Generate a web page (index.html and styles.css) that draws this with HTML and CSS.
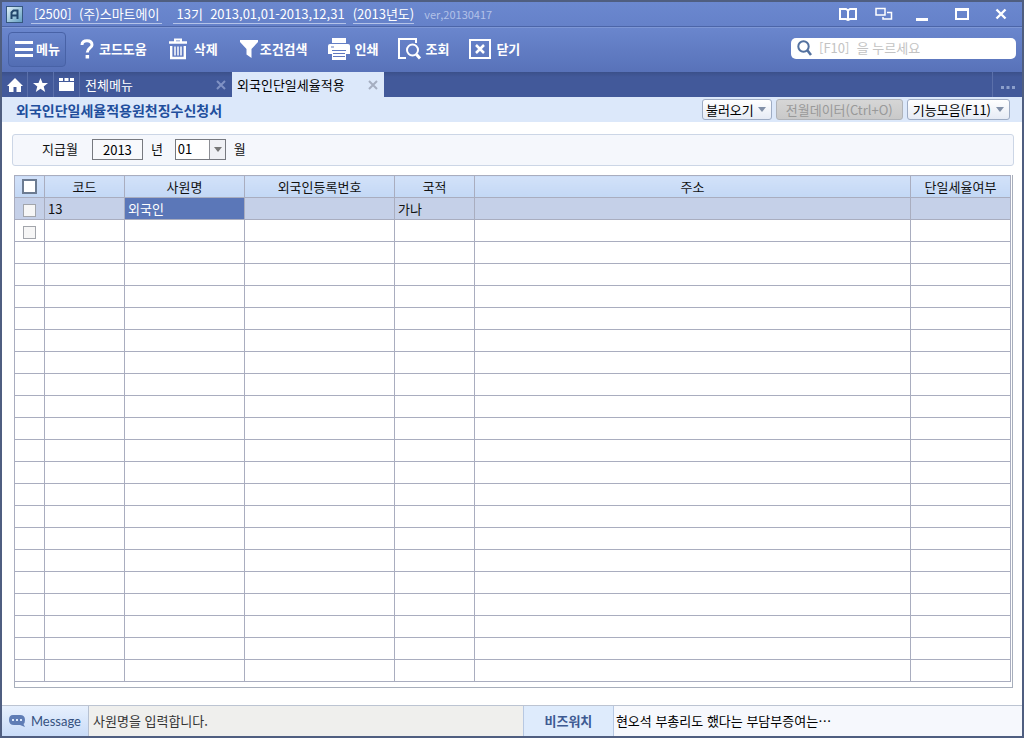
FILE: index.html
```html
<!DOCTYPE html>
<html lang="ko">
<head>
<meta charset="utf-8">
<title>외국인단일세율적용원천징수신청서</title>
<link rel="stylesheet" href="styles.css">
</head>
<body>
<div class="window">
  <header class="titlebar">
    <svg class="logo" viewBox="0 0 17 17" width="17" height="17" aria-hidden="true">
      <defs><linearGradient id="lg" x1="0" y1="0" x2="1" y2="1"><stop offset="0" stop-color="#e4f4fa"/><stop offset="1" stop-color="#5f9cc0"/></linearGradient></defs>
      <rect x=".5" y=".5" width="16" height="16" fill="url(#lg)" stroke="#35577f"/>
      <path d="M5.5 13V6.5L7.5 4.5H11.500V13M5.500 9.500H11.500" fill="none" stroke="#21456b" stroke-width="2"/>
    </svg>
    <span class="company">[2500]&nbsp; (주)스마트에이</span>
    <span class="period">13기&nbsp; 2013,01,01-2013,12,31</span>
    <span class="year">(2013년도)</span>
    <span class="version">ver,20130417</span>
    <div class="window-buttons">
      <button aria-label="도움말"><svg width="18" height="14" viewBox="0 0 18 14" fill="none" stroke="#fff" stroke-width="2"><path d="M1 2H7L9 3.500L11 2H17V12H11L9 13L7 12H1ZM9 3V12"/></svg></button>
      <button aria-label="창 전환"><svg width="18" height="14" viewBox="0 0 18 14" fill="none" stroke="#fff" stroke-width="1.500"><path d="M1 1.500H10V8H1ZM12 5.500H16.500V12H8V10"/></svg></button>
      <button aria-label="최소화"><svg width="14" height="14" viewBox="0 0 14 14"><path d="M1 11H13V14H1Z" fill="#fff"/></svg></button>
      <button aria-label="최대화"><svg width="14" height="14" viewBox="0 0 14 14"><path d="M0 1H14V13H0ZM2 4V11H12V4Z" fill="#fff" fill-rule="evenodd"/></svg></button>
      <button aria-label="창 닫기"><svg width="12" height="14" viewBox="0 0 12 14"><path d="M1.500 2.500L10.500 11.500M10.500 2.500L1.500 11.500" stroke="#fff" stroke-width="2.400"/></svg></button>
    </div>
  </header>

  <nav class="toolbar">
    <button class="tool tool-menu"><svg width="18" height="18" viewBox="0 0 18 18"><path d="M0 1H18V4H0ZM0 8H18V11H0ZM0 14H18V17H0Z" fill="#fff"/></svg>메뉴</button>
    <button class="tool tool-help"><svg width="14" height="20" viewBox="0 0 14 20"><path d="M2 6C2 3 4 1.800 7 1.800C10 1.800 12 3.300 12 6C12 9 7.300 9 7.300 13.500" fill="none" stroke="#fff" stroke-width="3"/><rect x="5.600" y="16" width="3.500" height="3.500" fill="#fff"/></svg>코드도움</button>
    <button class="tool tool-delete"><svg width="18" height="22" viewBox="0 0 18 22" fill="none" stroke="#fff"><path d="M0 4.500H18" stroke-width="2.500"/><path d="M6 4V1.500H12V4" stroke-width="2"/><path d="M2.200 8V20H15.800V8" stroke-width="2.400"/><path d="M6 8.500V17.500M9 8.500V17.500M12 8.500V17.500" stroke-width="1.500"/></svg>삭제</button>
    <button class="tool tool-filter"><svg width="18" height="18" viewBox="0 0 18 18"><path d="M0 0H18V2L11.500 9V18L6.500 14.500V9L0 2Z" fill="#fff"/></svg>조건검색</button>
    <button class="tool tool-print"><svg width="22" height="22" viewBox="0 0 22 22"><path d="M4 0H18V5H4ZM2 6H20Q22 6 22 8V16H18V12H4V16H0V8Q0 6 2 6Z" fill="#fff"/><path d="M4 13H18V22H4Z" fill="#fff"/><path d="M3 9H6M5 15.500H17M5 18.500H17" stroke="#6078be"/></svg>인쇄</button>
    <button class="tool tool-view"><svg width="24" height="22" viewBox="0 0 24 22" fill="none" stroke="#fff" stroke-width="2"><path d="M8 20H1V1H18V5"/><circle cx="14.500" cy="12" r="5.500"/><path d="M18.500 16.500L22 20.500" stroke-width="3"/></svg>조회</button>
    <button class="tool tool-close"><svg width="22" height="20" viewBox="0 0 22 20" fill="none" stroke="#fff" stroke-width="2"><path d="M1 1H21V19H1Z"/><path d="M7 6L15 14M15 6L7 14" stroke-width="2.500"/></svg>닫기</button>
    <label class="search">
      <svg width="15" height="16" viewBox="0 0 15 16" fill="none" stroke="#53719f" stroke-width="2"><circle cx="6.500" cy="6.500" r="5.200"/><path d="M10.500 10.500L14 15" stroke-width="2.600"/></svg>
      <input type="text" placeholder="[F10]&nbsp; 을 누르세요" aria-label="검색">
    </label>
  </nav>

  <div class="tabs">
    <button class="tab-icon" aria-label="홈"><svg width="16" height="14" viewBox="0 0 16 14"><path d="M8 0L16 8H14V14H9.500V9H6.500V14H2V8H0Z" fill="#fff"/></svg></button>
    <button class="tab-icon" aria-label="즐겨찾기"><svg width="15" height="14" viewBox="0 0 15 14"><path d="M7.500 0L9.500 5H15L10.700 8.400L12.200 14L7.500 10.800L2.800 14L4.300 8.400L0 5H5.500Z" fill="#fff"/></svg></button>
    <button class="tab-icon" aria-label="폴더"><svg width="15" height="13" viewBox="0 0 15 13"><path d="M0 0H4V3H0ZM5.500 0H9.500V3H5.500ZM11 0H15V3H11ZM0 4H15V13H0Z" fill="#fff"/></svg></button>
    <div class="tab"><a href="#">전체메뉴</a><button aria-label="탭 닫기"><svg width="10" height="10" viewBox="0 0 10 10"><path d="M1 1L9 9M9 1L1 9" stroke="currentColor" stroke-width="2"/></svg></button></div>
    <div class="tab tab-active"><a href="#">외국인단일세율적용</a><button aria-label="탭 닫기"><svg width="10" height="10" viewBox="0 0 10 10"><path d="M1 1L9 9M9 1L1 9" stroke="currentColor" stroke-width="2"/></svg></button></div>
    <button class="tab-more" aria-label="더보기"><svg width="14" height="3" viewBox="0 0 14 3"><path d="M0 0H3V3H0ZM5.500 0H8.500V3H5.500ZM11 0H14V3H11Z" fill="#8c9fcb"/></svg></button>
  </div>

  <div class="page-head">
    <h1>외국인단일세율적용원천징수신청서</h1>
    <button class="action">불러오기<i class="arrow"></i></button>
    <button class="action action-wide" disabled>전월데이터(Ctrl+O)</button>
    <button class="action action-menu">기능모음(F11)<i class="arrow"></i></button>
  </div>

  <main class="content">
    <form class="filter">
      <label for="pay-year">지급월</label>
      <input id="pay-year" type="text" value="2013">
      <label for="pay-year">년</label>
      <span class="month"><select id="pay-month"><option>01</option><option>02</option><option>03</option></select><i class="arrow"></i></span>
      <label for="pay-month">월</label>
    </form>

    <div class="grid">
      <table>
        <colgroup><col class="c-check"><col class="c-code"><col class="c-name"><col class="c-reg"><col class="c-nation"><col><col class="c-flat"></colgroup>
        <thead><tr><th class="check"><input class="check-all" type="checkbox" aria-label="전체 선택"></th><th>코드</th><th>사원명</th><th>외국인등록번호</th><th>국적</th><th>주소</th><th>단일세율여부</th></tr></thead>
        <tbody>
          <tr class="selected"><td class="check"><input type="checkbox" aria-label="13 선택"></td><td>13</td><td class="current">외국인</td><td></td><td>가나</td><td></td><td></td></tr>
          <tr><td class="check"><input type="checkbox" aria-label="새 행 선택"></td><td></td><td></td><td></td><td></td><td></td><td></td></tr>
          <tr><td></td><td></td><td></td><td></td><td></td><td></td><td></td></tr>
          <tr><td></td><td></td><td></td><td></td><td></td><td></td><td></td></tr>
          <tr><td></td><td></td><td></td><td></td><td></td><td></td><td></td></tr>
          <tr><td></td><td></td><td></td><td></td><td></td><td></td><td></td></tr>
          <tr><td></td><td></td><td></td><td></td><td></td><td></td><td></td></tr>
          <tr><td></td><td></td><td></td><td></td><td></td><td></td><td></td></tr>
          <tr><td></td><td></td><td></td><td></td><td></td><td></td><td></td></tr>
          <tr><td></td><td></td><td></td><td></td><td></td><td></td><td></td></tr>
          <tr><td></td><td></td><td></td><td></td><td></td><td></td><td></td></tr>
          <tr><td></td><td></td><td></td><td></td><td></td><td></td><td></td></tr>
          <tr><td></td><td></td><td></td><td></td><td></td><td></td><td></td></tr>
          <tr><td></td><td></td><td></td><td></td><td></td><td></td><td></td></tr>
          <tr><td></td><td></td><td></td><td></td><td></td><td></td><td></td></tr>
          <tr><td></td><td></td><td></td><td></td><td></td><td></td><td></td></tr>
          <tr><td></td><td></td><td></td><td></td><td></td><td></td><td></td></tr>
          <tr><td></td><td></td><td></td><td></td><td></td><td></td><td></td></tr>
          <tr><td></td><td></td><td></td><td></td><td></td><td></td><td></td></tr>
          <tr><td></td><td></td><td></td><td></td><td></td><td></td><td></td></tr>
          <tr><td></td><td></td><td></td><td></td><td></td><td></td><td></td></tr>
          <tr><td></td><td></td><td></td><td></td><td></td><td></td><td></td></tr>
        </tbody>
      </table>
    </div>
  </main>

  <footer class="status">
    <div class="status-label"><svg width="18" height="14" viewBox="0 0 18 14"><path d="M5 1H12Q17 1 17 6Q17 9 15.500 10L17 13L12 11H6Q1 11 1 6Q1 1 5 1Z" fill="#5f7db5"/><path d="M4 5H6V7H4ZM8 5H10V7H8ZM12 5H14V7H12Z" fill="#dbe8fa"/></svg>Message</div>
    <div class="status-text">사원명을 입력합니다.</div>
    <div class="news-label">비즈워치</div>
    <div class="news-text">현오석 부총리도 했다는 부담부증여는…</div>
  </footer>
</div>
</body>
</html>
```

FILE: styles.css
```css
* { box-sizing: border-box; }

body, button, input, select {
  font-family: "Noto Sans CJK KR", sans-serif;
  font-size: 13px;
  line-height: 18px;
}

body { margin: 0; color: #111; }
button { padding: 0; border: 0; background: none; color: inherit; }
a { color: inherit; text-decoration: none; }
svg { display: block; flex: none; }

.window {
  display: flex;
  flex-direction: column;
  min-height: 100vh;
  border: 2px solid #4f5e80;
  background: #fff;
}

/* Title bar */
.titlebar {
  display: flex;
  align-items: center;
  height: 25px;
  padding: 0 15px 0 4px;
  border-bottom: 1px solid #4c65a8;
  background: linear-gradient(#6b88cf, #6581c9);
  color: #fff;
  white-space: nowrap;
}
.logo { margin-right: 8px; }
.company, .period, .year { border-bottom: 1px solid #b4c3e8; padding: 0 3px; line-height: 18px; }
.period { margin-left: 11px; padding: 0 1px 0 3px; }
.year { margin-left: 7px; padding: 0; }
.version { margin-left: 10px; color: #b3c2e8; font-size: 11px; }
.window-buttons { display: flex; gap: 22px; margin-left: auto; }
.window-buttons button:nth-child(n+4) { margin-left: 4px; }
.window-buttons button:nth-child(2) { margin-left: -4px; }

/* Toolbar */
.toolbar {
  display: flex;
  align-items: center;
  height: 45px;
  padding: 0 6px 2px;
  border-top: 1px solid #7e97d5;
  background: linear-gradient(#6a86cd, #5872b9);
  color: #fff;
}
.tool { display: flex; align-items: center; gap: 5px; font-weight: bold; white-space: nowrap; }
.tool-menu {
  gap: 3px;
  height: 35px;
  padding: 0 5px 0 6px;
  border: 1px solid #4862a6;
  border-radius: 4px;
  background: linear-gradient(#6884cb, #526db3);
}
.tool-help { margin-left: 14px; }
.tool-delete { margin-left: 22px; gap: 7px; }
.tool-filter { margin-left: 22px; gap: 2px; }
.tool-print { margin-left: 20px; }
.tool-view { margin-left: 20px; gap: 3px; }
.tool-close { margin-left: 20px; }
.search {
  display: flex;
  align-items: center;
  gap: 7px;
  width: 225px;
  height: 21px;
  margin: 0 0 2px auto;
  padding: 0 6px;
  border-radius: 5px;
  background: #fff;
}
.search input { flex: 1; min-width: 0; padding: 0; border: 0; outline: 0; background: none; }
.search input::placeholder { color: #c3c3c3; }

/* Tabs */
.tabs { display: flex; height: 25px; background: linear-gradient(#3b508a, #42599a 5px); color: #fff; }
.tab-icon {
  display: flex;
  align-items: center;
  justify-content: center;
  width: 26px;
  border-right: 1px solid #5b70aa;
}
.tab { display: flex; align-items: center; justify-content: space-between; width: 152px; padding: 0 6px 0 5px; }
.tab button { color: #8092c4; }
.tab-active { background: #dce8fa; color: #000; }
.tab-active button { color: #a5aec0; }
.tab-more {
  display: flex;
  align-items: center;
  justify-content: center;
  width: 30px;
  margin-left: auto;
  padding-top: 6px;
  border-left: 1px solid #5b70aa;
}

/* Page heading */
.page-head { display: flex; align-items: center; gap: 4px; height: 25px; padding: 0 12px 0 14px; background: #dce8fa; }
.page-head h1 { margin: 0 auto 0 0; color: #214e9c; font-size: 14px; line-height: 20px; }
.action {
  display: flex;
  align-items: center;
  justify-content: space-between;
  gap: 4px;
  height: 21px;
  padding: 0 5px 0 3px;
  border: 1px solid #9eacc4;
  border-radius: 3px;
  background: linear-gradient(#fff, #e6ebf5);
  color: #000;
  white-space: nowrap;
}
.action-wide { padding: 0 9px; }
.action-menu { padding: 0 5px; gap: 5px; }
.action:disabled { border-color: #b0b3b8; background: linear-gradient(#d6d6d6, #c9c9c9); color: #999; }
.arrow { flex: none; border: 4px solid transparent; border-top: 5px solid #8290a8; border-bottom: 0; }

/* Content */
.content { flex: 1; padding: 12px 8px 17px 10px; }
.filter {
  display: flex;
  align-items: center;
  height: 32px;
  margin-bottom: 9px;
  padding: 0 29px 2px;
  border: 1px solid #ccd6e6;
  border-radius: 3px;
  background: #f5f7fc;
}
.filter input { width: 51px; height: 21px; margin: 0 8px 0 14px; padding: 0; border: 1px solid #77797f; background: #f8f9fc; text-align: center; }
.month { display: flex; align-items: center; width: 51px; height: 21px; margin: 0 8px 0 12px; border: 1px solid #77797f; background: linear-gradient(to right, #fff 33px, #8c8e94 33px, #8c8e94 34px, #f0f1f5 34px); }
.month select { width: 38px; height: 19px; padding: 0 2px; border: 0; outline: 0; appearance: none; background: none; }
.month .arrow { pointer-events: none; border-top-color: #777; }

/* Data grid */
.grid { margin: 0 1px 0 2px; padding: 0 1px 5px 0; border: 1px solid #a7aebb; border-top: 0; }
.grid table { width: calc(100% + 1px); margin-left: -1px; border-collapse: collapse; table-layout: fixed; }
.grid tr { height: 22px; }
.grid th, .grid td { height: 22px; padding: 0 3px; border: 1px solid #a9adbf; line-height: 18px; white-space: nowrap; }
.grid th { background: linear-gradient(#d2e1f9, #c3d8f5); font-weight: normal; }
.grid .selected td { background: #c5d0e8; }
.grid .selected .current { background: #5b77b8; color: #fff; }
.grid .check { padding: 0; text-align: center; }
.grid input { display: block; width: 13px; height: 13px; margin: 4px auto 0; border: 1px solid #a2a5ab; appearance: none; background: #f6f6f6; }
.grid .check-all { width: 15px; height: 15px; margin: 0 auto; border: 2px solid #6c7b91; background: #fff; }
.c-check { width: 30px; }
.c-code, .c-nation { width: 80px; }
.c-name { width: 120px; }
.c-reg { width: 150px; }
.c-flat { width: 100px; }

/* Status bar */
.status { display: flex; height: 31px; border-top: 1px solid #bcc4d2; background: #f6f8fd; white-space: nowrap; }
.status > div { display: flex; align-items: center; }
.status-label {
  gap: 5px;
  width: 87px;
  padding-left: 6px;
  border-right: 1px solid #b7c1d2;
  background: linear-gradient(#e7f0fd, #c9dcf8);
  color: #34517f;
  font-family: Lato, sans-serif;
}
.status-text { flex: 434; padding-left: 4px; background: #efefed; color: #333; }
.news-label {
  justify-content: center;
  width: 91px;
  border: 1px solid #b7c8e2;
  border-width: 0 1px;
  background: #deebfc;
  color: #3d5a92;
  font-weight: bold;
}
.news-text { flex: 410; padding-left: 2px; color: #000; }
```
